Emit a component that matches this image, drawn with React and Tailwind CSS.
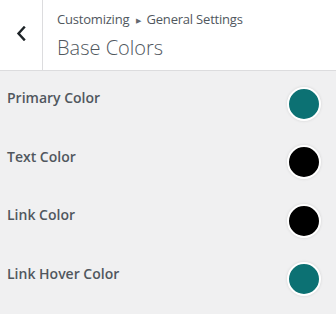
const rows = [
  { label: 'Primary Color', color: '#0c7173' },
  { label: 'Text Color', color: '#000000' },
  { label: 'Link Color', color: '#000000' },
  { label: 'Link Hover Color', color: '#0c7173' },
]

// ── Header ────────────────────────────────────────────────────────────────────
function Header() {
  return (
    <div className="flex h-[71px] bg-white border-b border-[#dcdcde]">
      <button className="w-[43px] shrink-0 flex items-center justify-center border-r border-[#dcdcde] pb-[4px]">
        <svg width="10" height="15" viewBox="0 0 10 15" fill="none">
          <path d="M8 1.5L2.5 7.5L8 13.5" stroke="#1d2327" strokeWidth="2.4" strokeLinecap="square" />
        </svg>
      </button>
      <div className="pl-[14px] pt-[9px]">
        <div className="text-[13px] leading-[20px] text-[#50575e] tracking-[-0.2px]">
          Customizing <span className="text-[7px] align-[1px] mx-[3px] text-[#646970]">▶</span> General Settings
        </div>
        <div className="text-[20px] leading-[28px] font-light text-[#50575e] mt-[3px]">Base Colors</div>
      </div>
    </div>
  )
}

// ── ColorRow ──────────────────────────────────────────────────────────────────
function ColorRow({ label, color }) {
  return (
    <div className="flex items-start justify-between h-[58.5px] pl-[7px] pr-[15px]">
      <span className="mt-[17px] text-[14px] leading-[20px] font-semibold text-[#50575e]">{label}</span>
      <span
        className="mt-[15.5px] w-[34px] h-[34px] rounded-full border-2 border-white shadow-[0_0_3px_rgba(0,0,0,0.12)]"
        style={{ backgroundColor: color }}
      />
    </div>
  )
}

export default function App() {
  return (
    <div className="w-[336px] h-[314px] bg-[#f0f0f1] overflow-hidden" style={{ fontFamily: '"Open Sans", "Noto Sans", sans-serif' }}>
      <Header />
      {rows.map((r) => (
        <ColorRow key={r.label} {...r} />
      ))}
    </div>
  )
}
